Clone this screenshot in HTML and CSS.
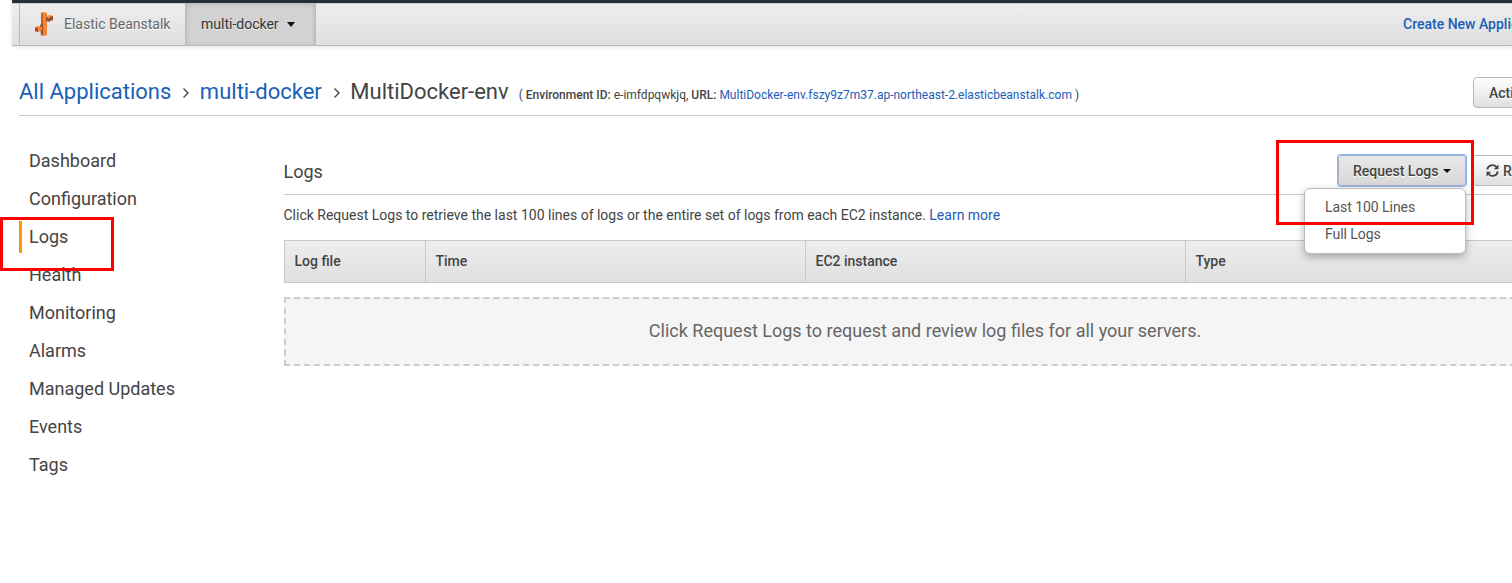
FILE: index.html
```html
<!DOCTYPE html>
<html lang="en">
<head>
<meta charset="utf-8">
<title>Elastic Beanstalk - Logs</title>
<link rel="stylesheet" href="styles.css">
</head>
<body>
<header class="topbar">
  <a class="service">
    <svg class="logo" width="18" height="24" viewBox="0 0 18 24">
      <path fill="#f58536" d="M6 1l3-1 3 1v22l-3 1-3-1z"/>
      <path fill="#c9661f" d="M6 1l2-.5v12l-2 1z"/>
      <path fill="#9d5025" d="M11 5l4 1v4l-4-1z"/>
      <path fill="#f58536" d="M11 4l4-1 3 1v4l-3 1V6z"/>
      <path fill="#9d5025" d="M15 5l3-1v4l-3 1zM5 13l3-2v12l-2 .5z"/>
      <path fill="#f58536" d="M0 15l3-1 4 1v3l-4 2-3-1z"/>
      <path fill="#9d5025" d="M0 15.500l3 1V20l-3-1z"/>
    </svg>
    <span>Elastic Beanstalk</span>
  </a>
  <a class="app"><span>multi-docker</span><i class="caret"></i></a>
  <a class="create">Create New Application</a>
</header>
<div class="page">
  <div class="crumbs">
    <a class="crumb">All Applications</a>
    <svg class="chevron" width="8" height="12" viewBox="0 0 8 12"><path d="M1.500 1.500L6 6l-4.500 4.500"/></svg>
    <a class="crumb">multi-docker</a>
    <svg class="chevron" width="8" height="12" viewBox="0 0 8 12"><path d="M1.500 1.500L6 6l-4.500 4.500"/></svg>
    <span class="crumb current">MultiDocker-env</span>
    <span class="env">( <b>Environment ID:</b> e-imfdpqwkjq, <b>URL:</b> <a>MultiDocker-env.fszy9z7m37.ap-northeast-2.elasticbeanstalk.com</a> )</span>
    <button class="btn actions">Actions <i class="caret"></i></button>
  </div>
  <div class="columns">
    <nav class="side">
      <a>Dashboard</a>
      <a>Configuration</a>
      <a class="selected">Logs</a>
      <a>Health</a>
      <a>Monitoring</a>
      <a>Alarms</a>
      <a>Managed Updates</a>
      <a>Events</a>
      <a>Tags</a>
      <span class="mark mark-side"></span>
    </nav>
    <main class="content">
      <div class="heading">
        <h2>Logs</h2>
        <div class="request">
          <button class="btn focused">Request Logs<i class="caret"></i></button>
          <div class="menu"><a>Last 100 Lines</a><a>Full Logs</a></div>
          <span class="mark mark-request"></span>
        </div>
        <button class="btn refresh">
          <svg width="13" height="13" viewBox="0 0 13 13"><path class="arc" d="M1.200 5.500A5.300 5.300 0 0 1 10.500 3M11.800 7.500A5.300 5.300 0 0 1 2.500 10"/><path class="tip" d="M12.500 .5v4.800H7.700zM.5 12.500V7.700h4.800z"/></svg>
          <span>Refresh</span>
        </button>
      </div>
      <p class="intro">Click Request Logs to retrieve the last 100 lines of logs or the entire set of logs from each EC2 instance. <a>Learn more</a></p>
      <div class="thead"><b>Log file</b><b>Time</b><b>EC2 instance</b><b>Type</b></div>
      <div class="empty">Click Request Logs to request and review log files for all your servers.</div>
    </main>
  </div>
</div>
</body>
</html>
```
FILE: styles.css
```css
* { box-sizing: border-box; }
html { overflow: hidden; }
body {
  margin: 0;
  width: 1512px;
  height: 583px;
  overflow: hidden;
  background: #fff;
  color: #444;
  font: 14px/20px Roboto, Arial, sans-serif;
}
a { color: #1a60b8; }
.topbar {
  display: flex;
  margin-left: 12px;
  padding-left: 7px;
  height: 46px;
  border-top: 3px solid #232f3e;
  border-bottom: 1px solid #bbb;
  background: linear-gradient(#eee, #dfdfdf);
  box-shadow: 0 1px 4px rgba(0, 0, 0, .12), inset 0 1px #ccc;
}
.topbar > * { flex-shrink: 0; white-space: nowrap; }
.service {
  display: flex;
  align-items: center;
  gap: 11px;
  width: 166px;
  padding-left: 15px;
  border-left: 1px solid #bbb;
  color: #666;
  text-shadow: 0 1px #fff;
}
.app {
  display: flex;
  align-items: center;
  gap: 8px;
  width: 131px;
  padding-left: 15px;
  border: solid #bbb;
  border-width: 0 1px;
  background: #d2d2d2;
  box-shadow: inset 0 1px 5px rgba(0, 0, 0, .16);
  color: #333;
  text-shadow: 0 1px #eee;
}
.caret {
  display: inline-block;
  border: solid transparent;
  border-width: 4px 4px 0;
  border-top-color: #111;
}
.app .caret { border-width: 5px 4.500px 0; }
.create { margin-left: 1087px; align-self: center; font-weight: 500; }
.page { width: 1547px; margin-left: 19px; }
.crumbs {
  display: flex;
  align-items: center;
  height: 70px;
  padding-top: 22px;
  border-bottom: 1px solid #c8c8c8;
  white-space: nowrap;
}
.crumb { font-size: 22px; line-height: 30px; }
.current { color: #444; }
.chevron { margin: 3px 9.500px 0 11px; fill: none; stroke: #444; stroke-width: 1.400; }
.env { margin: 7px 0 0 10px; font-size: 12px; }
.env b, .thead b { font-weight: 500; }
.btn {
  display: flex;
  align-items: center;
  height: 31px;
  border: 1px solid #b8b8b8;
  border-radius: 4px;
  background: linear-gradient(#fff, #dfdfdf);
  color: #444;
  font: 500 14px/20px Roboto, Arial, sans-serif;
  text-shadow: 0 1px #fff;
  white-space: nowrap;
}
.actions { width: 93px; padding: 0 15px; margin: 2px 0 0 auto; gap: 4px; }
.columns { display: flex; }
.side { position: relative; flex: none; width: 265px; padding-top: 29px; }
.side a {
  display: block;
  height: 32px;
  margin-bottom: 6px;
  padding-left: 10px;
  color: #444;
  font-size: 18px;
  line-height: 32px;
}
.side .selected { padding-left: 7px; border-left: 3px solid #f90; }
.mark { position: absolute; border: 3px solid #f00; pointer-events: none; }
.mark-side { left: -19px; top: 101px; width: 114px; height: 54px; }
.content { width: 1282px; }
.heading {
  display: flex;
  align-items: flex-end;
  height: 79px;
  padding-bottom: 8px;
  border-bottom: 1px solid #c8c8c8;
}
h2 { margin: 0 auto 2px -.5px; font-size: 18px; font-weight: 400; line-height: 24px; }
.request { position: relative; margin-right: 6px; }
.focused {
  width: 128px;
  padding: 0 14px;
  gap: 4px;
  border-color: #a8b4c8;
  border-radius: 3px;
  background: linear-gradient(#e8e8e8, #d8d8d8);
  box-shadow: 0 0 0 1px #8ab0f5;
}
.refresh { width: 94px; padding: 0 13px; gap: 4px; }
.refresh .arc { fill: none; stroke: #444; stroke-width: 1.800; }
.refresh .tip { fill: #444; }
.menu {
  position: absolute;
  top: 33px;
  right: 0;
  width: 162px;
  height: 66px;
  padding: 5px 20px;
  border: 1px solid #bbb;
  border-radius: 6px;
  background: #fff;
  box-shadow: 0 3px 8px rgba(0, 0, 0, .3);
}
.menu a { display: block; color: #555; line-height: 27px; letter-spacing: -.05px; }
.mark-request { left: -62px; top: -15px; width: 198px; height: 85px; }
.intro { margin: 10px 0 15px -.5px; }
.thead {
  display: grid;
  grid-template-columns: 140px 380px 380px 1fr;
  height: 43px;
  border: 1px solid #c8c8c8;
  background: linear-gradient(#eee, #dfdfdf);
  line-height: 41px;
}
.thead b { padding-left: 9.500px; }
.thead b + b { border-left: 1px solid #c8c8c8; }
.empty {
  height: 69px;
  margin-top: 14px;
  border: 2px dashed #ccc;
  background: #f5f5f5;
  color: #666;
  font-size: 18px;
  line-height: 64px;
  text-align: center;
}
```
